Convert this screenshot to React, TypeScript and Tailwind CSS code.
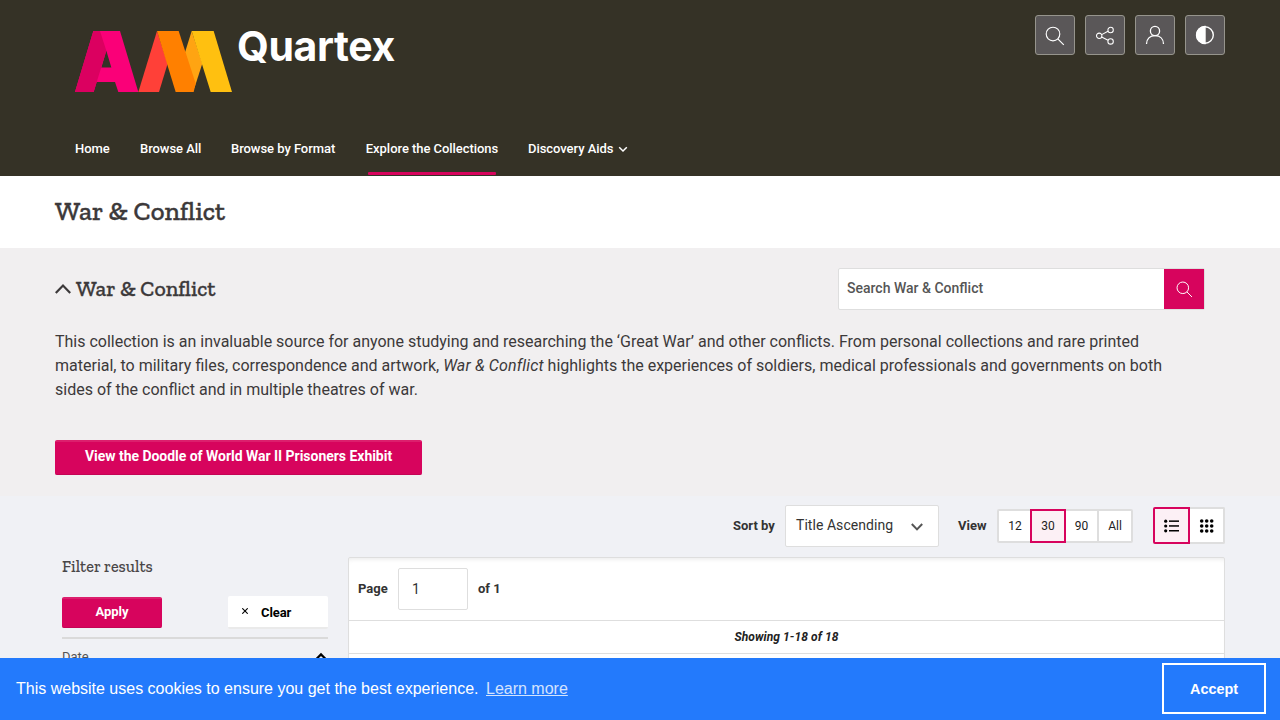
import type { ReactNode } from "react";

const roboto = "font-[Roboto,'Liberation_Sans',sans-serif]";
const slab = "font-['Zilla_Slab','DejaVu_Serif_Condensed','DejaVu_Serif',serif]";

function Logo() {
  return (
    <div className="flex h-[63px] items-start">
      <svg className="mt-px h-[61px] w-[157px]" viewBox="45 33 471 182" preserveAspectRatio="none" aria-hidden="true">
        <path fill="#fa0078" fillRule="evenodd" d="M100 33H180L235 215H175L165 185H110L101 215H45ZM139 92L124 142H154Z" />
        <path fill="#db0060" d="M100 33H120L139 92L101 215H45Z" />
        <path fill="#ff4038" d="M291 33L323 130L297 215H235Z" />
        <path fill="#ffa412" d="M395 33L427 130L403 204L375 97Z" />
        <path fill="#ffc010" d="M395 33H461L516 215H452Z" />
        <path fill="#ff8000" d="M291 33H356L407 190L401 215H347Z" />
      </svg>
      <span className="ml-[5px] -mt-[7px] font-[Inter,sans-serif] text-[41px] leading-[46px] font-bold tracking-[-0.4px] text-white">Quartex</span>
    </div>
  );
}

function SearchIcon({ className }: { className?: string }) {
  return (
    <svg className={className} viewBox="0 0 20 20" fill="none" stroke="currentColor" strokeWidth="1.15">
      <circle cx="8" cy="8" r="6.8" />
      <path d="M12.8 12.8L18.8 18.8" />
    </svg>
  );
}

function ToolButton({ label, children }: { label: string; children: ReactNode }) {
  return (
    <button aria-label={label} className="flex size-10 items-center justify-center rounded-[3px] border border-[#96948c] bg-[#5a5758] text-white">
      {children}
    </button>
  );
}

function Header() {
  return (
    <header className="h-44 bg-[#353226] px-[55px]">
      <div className="flex h-[121px] justify-between">
        <div className="pt-[30px] pl-5">
          <Logo />
        </div>
        <div className="flex gap-2.5 pt-[15px]">
          <ToolButton label="Search">
            <SearchIcon className="size-5 translate-y-px" />
          </ToolButton>
          <ToolButton label="Share">
            <svg className="h-5 w-5" viewBox="0 0 20 20" fill="none" stroke="currentColor" strokeWidth="1.05">
              <circle cx="4.2" cy="10.8" r="2.7" />
              <circle cx="15.6" cy="5" r="2.7" />
              <circle cx="15.6" cy="16.4" r="2.7" />
              <path d="M6.7 9.6L13 6.3M6.7 12L13 15.2" />
            </svg>
          </ToolButton>
          <ToolButton label="Account">
            <svg className="size-5" viewBox="0 0 20 20" fill="none" stroke="currentColor" strokeWidth="1.3">
              <circle cx="10" cy="6" r="4.6" />
              <path d="M1.5 19C1.5 13.8 5 10.6 10 10.6S18.5 13.8 18.5 19" />
            </svg>
          </ToolButton>
          <ToolButton label="Contrast">
            <svg className="size-5" viewBox="0 0 20 20" fill="none" stroke="currentColor" strokeWidth="1.4">
              <circle cx="10" cy="10" r="8.3" />
              <path d="M10 1.5A8.5 8.5 0 0 0 10 18.5Z" fill="currentColor" />
            </svg>
          </ToolButton>
        </div>
      </div>
      <nav className="flex h-[55px] gap-[30px] pl-5 text-[13px] leading-[55px] font-medium tracking-[-0.05px] whitespace-nowrap text-white">
        <a className="w-[35px]">Home</a>
        <a className="w-[61px]">Browse All</a>
        <a className="w-[105px]">Browse by Format</a>
        <a className="flex w-[132px] flex-col items-center">
          <span className="h-[51px]">Explore the Collections</span>
          <span className="h-[3px] w-32 rounded-[1px] bg-[#d7045d]" />
        </a>
        <a className="flex items-center">
          Discovery Aids
          <svg className="mt-px ml-[5px] h-2.5 w-2.5" viewBox="0 0 10 10" fill="none" stroke="currentColor" strokeWidth="1.5">
            <path d="M1.2 3.2L5 7L8.8 3.2" />
          </svg>
        </a>
      </nav>
    </header>
  );
}

function Intro() {
  return (
    <section className="h-[248px] bg-[#f1eff0] px-[55px] pt-5">
      <div className="flex h-[42px] justify-between pr-5">
        <h2 className={`${slab} flex items-center text-[21.8px] leading-[42px] font-medium text-[#3c393a] [-webkit-text-stroke:0.3px_#3c393a]`}>
          <svg className="mr-[5px] h-4 w-4" viewBox="0 0 16 16" fill="none" stroke="currentColor" strokeWidth="2.2">
            <path d="M0.8 12L8 4.6L15.2 12" />
          </svg>
          War &amp; Conflict
        </h2>
        <div className="flex w-[367px] rounded-[2px] border border-[#dedede] bg-white">
          <span className="flex-1 pl-2 text-sm leading-[38px] font-medium text-[#555]">Search War &amp; Conflict</span>
          <button aria-label="Search collection" className="flex w-10 items-center justify-center bg-[#d7045d] text-white">
            <SearchIcon className="size-[17px]" />
          </button>
        </div>
      </div>
      <p className="mt-5 text-base leading-6 whitespace-nowrap text-[#3c393a]">
        This collection is an invaluable source for anyone studying and researching the ‘Great War’ and other conflicts. From personal collections and rare printed
        <br />
        material, to military files, correspondence and artwork, <em className="tracking-[0.15px]">War &amp; Conflict</em> highlights the experiences of soldiers, medical professionals and governments on both
        <br />
        sides of the conflict and in multiple theatres of war.
      </p>
      <button className="mt-[38px] block h-[35px] w-[367px] rounded-[2px] border-t-2 border-b border-t-[#dc1f6d] border-b-[#c40455] bg-[#d7045d] pb-[5px] text-sm font-bold tracking-[-0.03px] whitespace-nowrap text-white">
        View the Doodle of World War II Prisoners Exhibit
      </button>
    </section>
  );
}

function Controls() {
  return (
    <div className="flex h-[61px] items-center justify-end pr-[55px] pb-0.5 text-[13px] text-[#333]">
      <span className="mr-2.5 w-[42px] font-bold">Sort by</span>
      <div className="flex h-[42px] w-[154px] items-center rounded-[2px] border border-[#dedede] bg-white pl-2.5 text-sm">
        <span className="w-[98px] pb-0.5 tracking-[0.05px]">Title Ascending</span>
        <svg className="mt-0.5 ml-[17px] h-3 w-3" viewBox="0 0 12 12" fill="none" stroke="#555" strokeWidth="2">
          <path d="M0.8 3L6 8.4L11.2 3" />
        </svg>
      </div>
      <span className="ml-[19px] w-[39px] font-bold">View</span>
      <div className="flex h-[34px] w-[136px] rounded-[2px] border-2 border-[#dedede] bg-white text-xs leading-[30px] text-[#222]">
        <span className="w-8 text-center">12</span>
        <span className="-my-0.5 -ml-px w-9 border-2 border-[#d7045d] bg-[#fcf0f5] text-center">30</span>
        <span className="w-[33px] border-r-2 border-[#dedede] text-center">90</span>
        <span className="flex-1 text-center">All</span>
      </div>
      <div className="ml-5 flex h-[37px] w-[72px] text-black">
        <span className="flex w-[37px] items-center justify-center rounded-l-[2px] border-2 border-[#d7045d] bg-[#fcf0f5]">
          <svg className="h-4 w-4" viewBox="0 0 16 16" fill="currentColor">
            <circle cx="1.7" cy="3.2" r="1.6" /><circle cx="1.7" cy="8" r="1.6" /><circle cx="1.7" cy="12.8" r="1.6" />
            <rect x="5" y="2.4" width="10" height="1.5" /><rect x="5" y="7.2" width="10" height="1.5" /><rect x="5" y="12" width="10" height="1.5" />
          </svg>
        </span>
        <span className="flex flex-1 items-center justify-center rounded-r-[2px] border-y-2 border-r-2 border-[#dedede] bg-white">
          <svg className="h-4 w-4" viewBox="0 0 16 16" fill="currentColor">
            {[3, 8, 13].flatMap((y) => [2.7, 7.7, 12.7].map((x) => <circle key={`${x}-${y}`} cx={x} cy={y} r="1.8" />))}
          </svg>
        </span>
      </div>
    </div>
  );
}

function Filters() {
  return (
    <aside className="w-[266px]">
      <h3 className={`${slab} h-10 text-[16.2px] leading-5 font-medium text-[#494647]`}>Filter results</h3>
      <div className="flex h-[42px] justify-between border-b-2 border-[#dadada] text-[13px] font-bold">
        <button className="h-[31px] w-[100px] rounded-[2px] border-t-2 border-b border-t-[#dc1f6d] border-b-[#c40455] bg-[#d7045d] pb-0.5 text-white">Apply</button>
        <button className="-mt-px flex h-[33px] w-[100px] items-center rounded-[2px] border-b-2 border-[#eaeaea] bg-white pl-3.5 text-black">
          <svg className="mr-[13px] mb-0.5 h-[6px] w-[6px]" viewBox="0 0 6 6" stroke="currentColor" strokeWidth="1.1">
            <path d="M0.3 0.3L5.7 5.7M5.7 0.3L0.3 5.7" />
          </svg>
          <span className="pt-0.5 tracking-[-0.1px]">Clear</span>
        </button>
      </div>
      <div className="flex h-9 items-center justify-between pr-px text-[13px] text-[#555]">
        Date
        <svg className="h-3 w-3" viewBox="0 0 12 12" fill="none" stroke="#000" strokeWidth="2.2">
          <path d="M1.2 8.2L6 3.4L10.8 8.2" />
        </svg>
      </div>
    </aside>
  );
}

function Results() {
  return (
    <main className="w-[877px] rounded-t-[2px] border border-[#dedede] bg-white text-[13px] font-bold text-[#333] shadow-[inset_0_4px_5px_-3px_#e8e8e8]">
      <div className="flex h-[63px] items-center border-b border-[#dedede] pb-px pl-[9px]">
        <span className="w-10">Page</span>
        <span className="h-[42px] w-[70px] rounded-[2px] border border-[#dedede] pl-[13px] text-sm leading-10 font-normal">1</span>
        <span className="ml-2.5">of 1</span>
      </div>
      <div className="h-[33px] border-b border-[#dedede] text-center text-xs leading-8 tracking-[0.08px] text-[#222] italic">Showing 1-18 of 18</div>
    </main>
  );
}

export default function App() {
  return (
    <div className={`${roboto} flex h-[720px] w-[1280px] flex-col overflow-hidden bg-[#f0f1f5]`}>
      <div className="h-[658px] shrink-0 overflow-hidden">
        <Header />
        <h1 className={`${slab} h-[72px] bg-white pl-[55px] text-[26.6px] leading-[71px] font-medium text-[#3c393a] [-webkit-text-stroke:0.35px_#3c393a]`}>War &amp; Conflict</h1>
        <Intro />
        <Controls />
        <div className="flex h-[160px] gap-5 pl-[62px]">
          <Filters />
          <Results />
        </div>
      </div>
      <footer className="flex h-[62px] shrink-0 items-center justify-between bg-[#237afc] pr-3.5 pl-4 font-['Liberation_Sans',Arial,sans-serif] text-base text-white">
        <p>
          This website uses cookies to ensure you get the best experience.
          <a className="ml-[7.5px] underline opacity-80">Learn more</a>
        </p>
        <button className="mb-px h-[51px] w-[104px] border-2 border-white pt-0.5 text-[14.4px] font-bold">Accept</button>
      </footer>
    </div>
  );
}
